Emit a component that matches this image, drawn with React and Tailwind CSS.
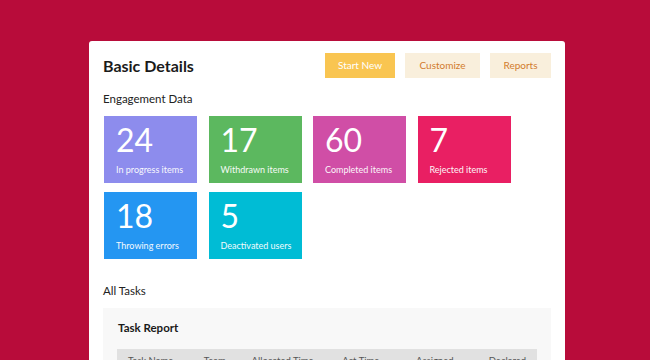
import React from "react";

const stats = [
  { value: "24", label: "In progress items", color: "bg-[#8d8ced]" },
  { value: "17", label: "Withdrawn items", color: "bg-[#5cb85f]" },
  { value: "60", label: "Completed items", color: "bg-[#d04ea6]" },
  { value: "7", label: "Rejected items", color: "bg-[#e91f63]" },
  { value: "18", label: "Throwing errors", color: "bg-[#2496f2]" },
  { value: "5", label: "Deactivated users", color: "bg-[#00bcd5]" },
];

const columns = [
  "Task Name",
  "Team",
  "Allocated Time",
  "Act Time",
  "Assigned",
  "Declared",
];

const StatTile = ({ value, label, color }) => (
  <div className={`${color} h-[67px] pl-[12px] pt-[4px] text-white`}>
    <div className="text-[32px] font-normal leading-[40px]">{value}</div>
    <div className="mt-[4px] text-[9px] leading-[12px] opacity-95">{label}</div>
  </div>
);

export default function App() {
  return (
    <div
      className="h-[360px] w-[650px] overflow-hidden bg-[#b80c3a] pt-[41px]"
      style={{ fontFamily: '"Lato", "Open Sans", sans-serif' }}
    >
      <div className="ml-[89px] h-[400px] w-[476px] rounded-[3px] bg-white px-[14px] pt-[12px]">
        {/* header */}
        <div className="flex items-center justify-between">
          <h1 className="text-[16px] font-bold text-[#1a1a1a]">Basic Details</h1>
          <div className="flex gap-[10px]">
            <button className="h-[25px] w-[70px] bg-[#f9c551] text-[10px] text-white">
              Start New
            </button>
            <button className="h-[25px] w-[75px] bg-[#f9efdc] text-[10px] text-[#d27c2c]">
              Customize
            </button>
            <button className="h-[25px] w-[61px] bg-[#f9efdc] text-[10px] text-[#d27c2c]">
              Reports
            </button>
          </div>
        </div>

        <div className="mt-[13px] text-[11.5px] leading-[16px] text-[#222]">
          Engagement Data
        </div>

        <div className="mt-[9px] grid grid-cols-[repeat(4,93px)] gap-x-[11.5px] gap-y-[9px] pl-px">
          {stats.map((s) => (
            <StatTile key={s.label} {...s} />
          ))}
        </div>

        <div className="mt-[24px] text-[11.5px] leading-[16px] text-[#222]">All Tasks</div>

        <div className="mt-[9px] bg-[#f8f8f8] px-[14px] pt-[12px]">
          <div className="pl-px text-[11.5px] font-bold leading-[16px] text-[#1a1a1a]">
            Task Report
          </div>
          <div className="mt-[13px] flex h-[30px] items-start bg-[#e1e1e1] px-[11px] pt-[5px] text-[9.5px] text-[#555]">
            {columns.map((c, i) => (
              <div
                key={c}
                className={
                  [
                    "w-[76px]",
                    "w-[48px]",
                    "w-[91px]",
                    "w-[74px]",
                    "w-[73px]",
                    "flex-1",
                  ][i]
                }
              >
                {c}
              </div>
            ))}
          </div>
        </div>
      </div>
    </div>
  );
}
